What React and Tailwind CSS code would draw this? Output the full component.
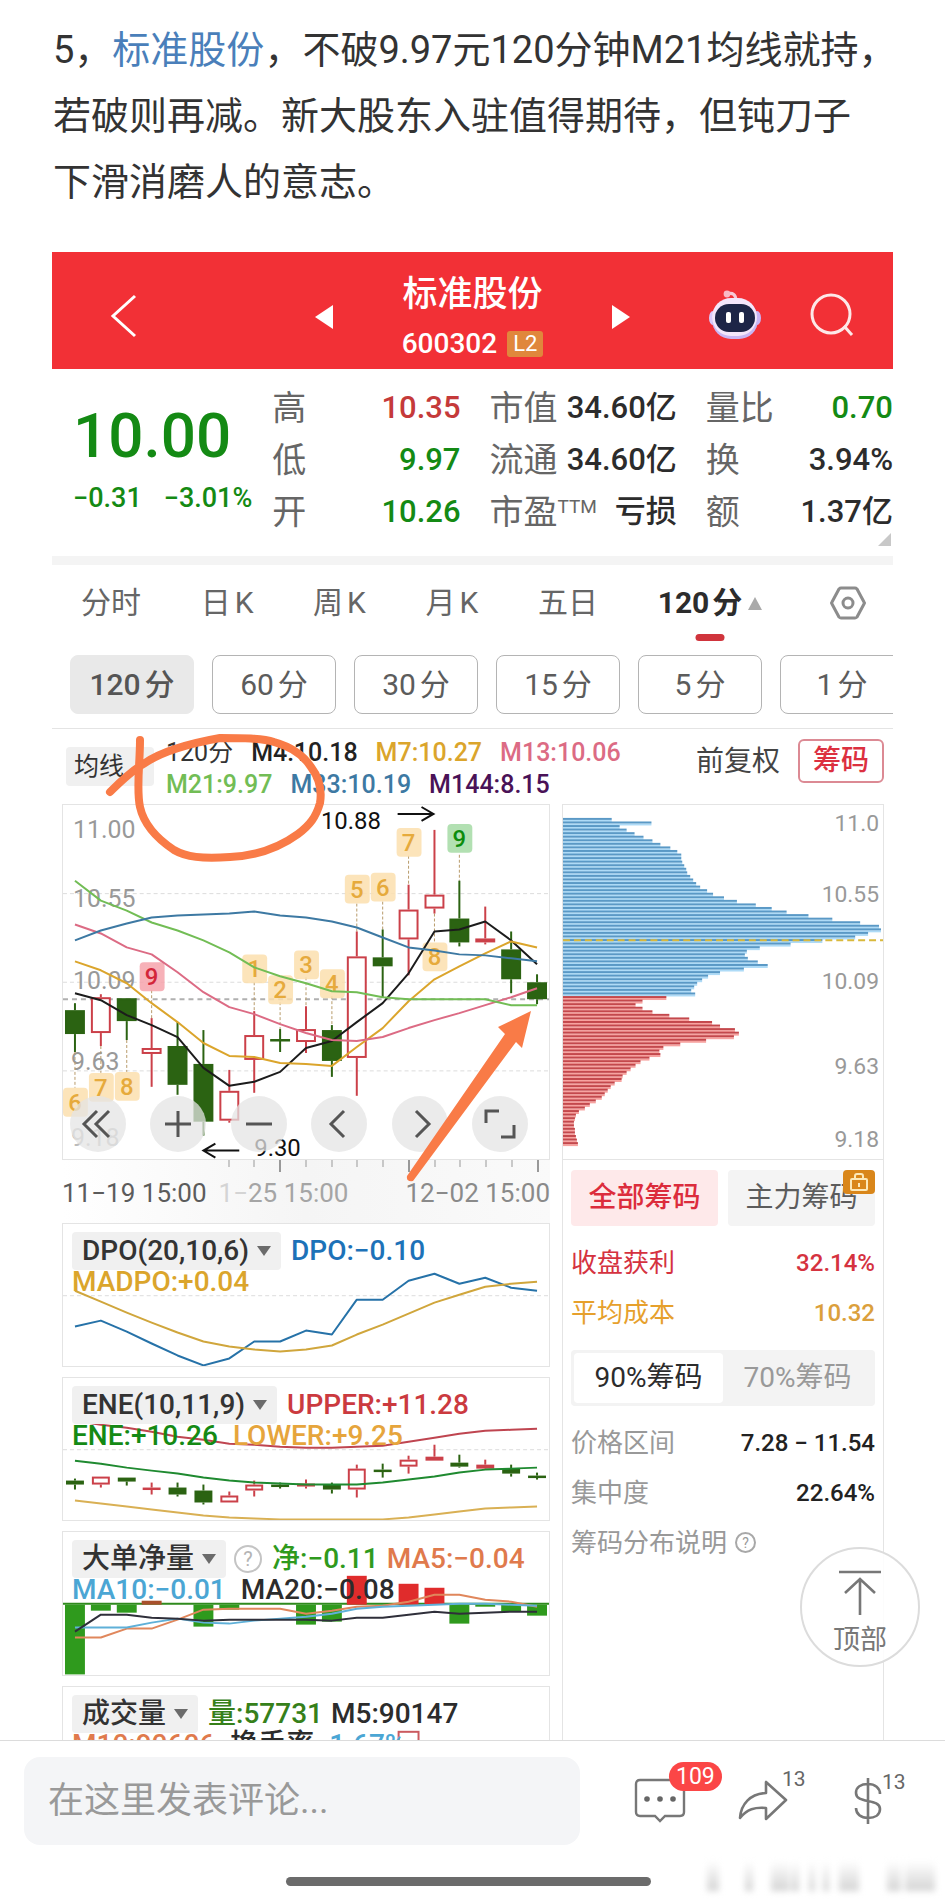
import React, { useState } from 'react';

const STEP = 25.75;
const px = (i) => Math.round(12 + STEP * i);
const toPoints = (ys) => ys.map((y, i) => `${px(i)},${y}`).join(' ');

// [body top, body bottom, high, low, up]
const candles = [
  [206, 230, 199, 248, 0],
  [193, 229, 190, 242, 1],
  [194, 217, 194, 236, 0],
  [244, 250, 214, 283, 1],
  [242, 281, 218, 291, 0],
  [260, 318, 226, 332, 0],
  [287, 317, 266, 319, 1],
  [231, 256, 207, 289, 1],
  [235, 237, 225, 248, 0],
  [225, 238, 202, 249, 1],
  [226, 257, 221, 273, 0],
  [152, 254, 127, 292, 1],
  [153, 162, 125, 193, 0],
  [105, 135, 80, 171, 1],
  [90, 104, 25, 109, 1],
  [114, 138, 76, 142, 0],
  [134, 138, 102, 140, 1],
  [145, 175, 127, 189, 0],
  [178, 195, 170, 200, 0],
];

const averages = [
  { color: '#1c1c1c', ys: [189, 196, 211, 221, 233, 264, 282, 278, 268, 244, 237, 218, 199, 169, 127, 125, 117, 136, 160] },
  { color: '#dba52c', ys: [157, 166, 179, 199, 218, 239, 252, 253, 259, 260, 262, 243, 224, 197, 175, 162, 149, 137, 143] },
  { color: '#dc6b84', ys: [120, 129, 143, 150, 168, 188, 203, 210, 220, 229, 236, 237, 233, 224, 216, 209, 201, 193, 184] },
  { color: '#72bd55', ys: [76, 96, 106, 118, 126, 136, 148, 163, 172, 179, 187, 188, 193, 195, 195, 195, 195, 201, 201] },
  { color: '#3d79a3', ys: [136, 126, 119, 113, 111, 110, 109, 107, 111, 113, 117, 123, 133, 143, 146, 150, 151, 154, 157] },
];

// [text, candle index, badge top, leader start, leader end, kind]
const marks = [
  ['6', 0, 284, 248, 284, 'y'],
  ['7', 1, 269, 242, 269, 'y'],
  ['8', 2, 268, 236, 268, 'y'],
  ['9', 3, 158, 186, 214, 'r'],
  ['1', 7, 150, 178, 207, 'y'],
  ['2', 8, 171, 198, 225, 'y'],
  ['3', 9, 146, 173, 202, 'y'],
  ['4', 10, 165, 192, 221, 'y'],
  ['5', 11, 70, 99, 127, 'y'],
  ['6', 12, 68, 97, 125, 'y'],
  ['7', 13, 23, 51, 80, 'y'],
  ['8', 14, 138, 109, 138, 'y'],
  ['9', 15, 19, 50, 76, 'g'],
];

const markColors = {
  y: { bg: '#fbdfae', fg: '#e6aa3c' },
  r: { bg: '#f6a3ab', fg: '#d3263a' },
  g: { bg: '#a4dba4', fg: '#0c8c0c' },
};

const blueChips = [
  49, 89, 57, 64, 72, 81, 90, 98, 108, 115, 119, 119, 120, 122, 124, 125, 128, 131, 134, 138, 145, 151, 162, 175, 194,
  210, 225, 247, 271, 299, 318, 320, 307, 294, 261, 229, 198, 185, 183, 186, 196, 206, 182, 158, 146, 140, 135, 132,
  129, 133,
];
const redChips = [
  104, 80, 73, 80, 90, 107, 127, 150, 158, 173, 177, 172, 144, 118, 101, 97, 98, 87, 78, 73, 68, 64, 60, 59, 52, 48,
  45, 42, 39, 33, 27, 22, 16, 13, 12, 11, 11, 12, 12, 13, 14, 15,
];

const dpo = [103, 97, 108, 120, 132, 142, 135, 118, 118, 107, 111, 76, 76, 57, 50, 60, 54, 64, 67];
const madpo = [67, 78, 89, 99, 109, 118, 123, 126, 128, 126, 122, 111, 101, 90, 79, 71, 63, 60, 58];

const eneUpper = [43, 47, 50, 54, 59, 62, 66, 67, 69, 70, 70, 69, 68, 64, 60, 56, 53, 52, 51];
const eneMid = [83, 86, 90, 93, 96, 100, 103, 105, 106, 107, 107, 107, 105, 102, 99, 95, 92, 91, 90];
const eneLower = [123, 126, 129, 132, 135, 138, 140, 141, 142, 142, 142, 142, 142, 140, 137, 134, 131, 130, 129];
const eneCandles = [
  [103, 107, 101, 112, 0],
  [99, 107, 99, 110, 1],
  [100, 104, 100, 108, 0],
  [110, 111, 105, 117, 1],
  [110, 117, 105, 119, 0],
  [113, 125, 107, 127, 0],
  [118, 125, 114, 125, 1],
  [107, 113, 103, 119, 1],
  [107, 109, 105, 111, 0],
  [106, 109, 102, 111, 1],
  [107, 112, 105, 116, 0],
  [91, 112, 87, 120, 1],
  [92, 94, 86, 100, 0],
  [82, 89, 78, 96, 1],
  [79, 83, 67, 83, 1],
  [85, 89, 77, 90, 0],
  [87, 91, 82, 92, 1],
  [91, 96, 87, 99, 0],
  [98, 100, 95, 102, 0],
];

// [candle index, top, bottom, color]
const netBars = [
  [0, 73, 143, '#2f9a1d'],
  [1, 73, 79, '#2f9a1d'],
  [2, 73, 81, '#2f9a1d'],
  [3, 69, 73, '#a8502c'],
  [5, 73, 95, '#2f9a1d'],
  [6, 73, 78, '#2f9a1d'],
  [9, 73, 93, '#2f9a1d'],
  [10, 73, 90, '#2f9a1d'],
  [11, 44, 73, '#e02c2c'],
  [13, 52, 73, '#e02c2c'],
  [14, 56, 73, '#e02c2c'],
  [15, 73, 92, '#2f9a1d'],
  [16, 73, 75, '#2f9a1d'],
  [17, 73, 80, '#2f9a1d'],
  [18, 73, 84, '#2f9a1d'],
];
const netMa5 = [106, 106, 97, 97, 88, 78, 77, 77, 77, 82, 79, 75, 74, 70, 63, 63, 68, 70, 75];
const netMa10 = [96, 96, 96, 91, 87, 91, 92, 89, 87, 85, 82, 77, 75, 74, 73, 72, 72, 73, 74];
const netMa20 = [100, 83, 83, 86, 87, 89, 88, 88, 88, 88, 89, 86, 86, 83, 80, 82, 81, 80, 80];

const quoteCols = [
  [
    ['高', '10.35', 'text-[#c53a3a]'],
    ['低', '9.97', 'text-[#148a14]'],
    ['开', '10.26', 'text-[#148a14]'],
  ],
  [
    ['市值', '34.60亿', 'text-[#2c2c2c]'],
    ['流通', '34.60亿', 'text-[#2c2c2c]'],
    ['市盈', '亏损', 'text-[#2c2c2c]', 'TTM'],
  ],
  [
    ['量比', '0.70', 'text-[#148a14]'],
    ['换', '3.94%', 'text-[#2c2c2c]'],
    ['额', '1.37亿', 'text-[#2c2c2c]'],
  ],
];

const Candle = ({ i, data, half }) => {
  const [top, bottom, high, low, up] = data;
  const x = px(i);
  const color = up ? '#cb4049' : '#2b6312';
  return (
    <g stroke={color} strokeWidth="2">
      <line x1={x} x2={x} y1={high} y2={top} />
      <line x1={x} x2={x} y1={bottom} y2={low} />
      <rect
        x={x - half + 1}
        y={top + 1}
        width={half * 2 - 2}
        height={Math.max(bottom - top - 2, 0.5)}
        fill={up ? '#fff' : color}
      />
    </g>
  );
};

const Line = ({ ys, color, width = 2 }) => (
  <polyline points={toPoints(ys)} fill="none" stroke={color} strokeWidth={width} strokeLinejoin="round" />
);

const Caret = () => (
  <svg viewBox="0 0 14 10" className="h-[10px] w-[14px]" aria-hidden="true">
    <path d="M0 0h14L7 10z" fill="#6b6b6b" />
  </svg>
);

const Header = () => (
  <header className="grid h-[117px] grid-cols-[minmax(0,1fr)_316px_minmax(0,1fr)] items-center bg-[#f23036] text-white">
    <div className="pl-[57px] pt-[10px]">
      <button aria-label="返回" className="block">
        <svg viewBox="0 0 28 44" className="h-[44px] w-[28px]" fill="none" stroke="#fff" strokeWidth="3">
          <path d="M26 2 4 22l22 20" />
        </svg>
      </button>
    </div>
    <div className="flex items-center justify-between">
      <button aria-label="上一只" className="pt-3">
        <svg viewBox="0 0 18 24" className="h-6 w-[18px]" fill="#fff">
          <path d="M18 0v24L0 12z" />
        </svg>
      </button>
      <div className="flex flex-col items-center pt-4">
        <h1 className="text-[35px] font-medium leading-[50px]">标准股份</h1>
        <div className="flex items-center gap-2.5">
          <span className="text-[28px] font-medium leading-[48px]">600302</span>
          <span className="rounded-[3px] bg-[#e0873c] px-1.5 text-[22px] leading-[26px]">L2</span>
        </div>
      </div>
      <button aria-label="下一只" className="pt-3">
        <svg viewBox="0 0 18 24" className="h-6 w-[18px]" fill="#fff">
          <path d="M0 0v24l18-12z" />
        </svg>
      </button>
    </div>
    <div className="flex items-center justify-between pl-[77px] pr-[38px] pt-2">
      <button aria-label="智能助手">
        <svg viewBox="0 0 54 50" className="h-[50px] w-[54px]">
          <path d="M19 4c6-2 9 1 9 7" fill="none" stroke="#f7c9d6" strokeWidth="3" />
          <circle cx="19" cy="4" r="3.4" fill="#f9b9c4" />
          <ellipse cx="5" cy="28" rx="4" ry="7" fill="#d9c8fb" />
          <ellipse cx="49" cy="28" rx="4" ry="7" fill="#c9b4f5" />
          <rect x="4" y="10" width="46" height="39" rx="19" fill="#c8b6f4" />
          <rect x="4" y="8" width="45" height="38" rx="19" fill="#f3e6fb" />
          <rect x="7" y="14" width="40" height="28" rx="14" fill="#1d2547" />
          <rect x="18" y="22" width="5" height="11" rx="2" fill="#fff" />
          <rect x="31" y="22" width="5" height="11" rx="2" fill="#fff" />
        </svg>
      </button>
      <button aria-label="搜索">
        <svg viewBox="0 0 46 46" className="size-[46px]" fill="none" stroke="#fde8e8" strokeWidth="3">
          <circle cx="22" cy="22" r="19" />
          <path d="m35 34 8 9" />
        </svg>
      </button>
    </div>
  </header>
);

const Quote = () => (
  <section className="relative grid grid-cols-[minmax(0,191fr)_minmax(0,188fr)_minmax(0,187fr)_minmax(0,187fr)] gap-x-[29px] pb-[18px] pt-[13px]">
    <div className="whitespace-nowrap pl-[21px] text-[#148a14]">
      <p className="pt-4 text-[62px] font-medium leading-[76px]">10.00</p>
      <p className="flex gap-[22px] text-[27px] font-medium leading-[48px]">
        <span>−0.31</span>
        <span>−3.01%</span>
      </p>
    </div>
    {quoteCols.map((col, c) => (
      <dl key={c} className="whitespace-nowrap">
        {col.map(([label, value, color, sup]) => (
          <div key={label} className="flex items-center justify-between leading-[52px]">
            <dt className="flex text-[34px] text-[#666]">
              {label}
              {sup && <span className="text-[19px] leading-[42px]">{sup}</span>}
            </dt>
            <dd className={`text-[31px] font-medium ${color}`}>{value}</dd>
          </div>
        ))}
      </dl>
    ))}
    <svg viewBox="0 0 13 13" className="absolute bottom-2.5 right-0.5 size-[13px]" aria-hidden="true">
      <path d="M13 0v13H0z" fill="#c8c8c8" />
    </svg>
  </section>
);

const PeriodTabs = () => {
  const tabs = [['分时'], ['日', 'K'], ['周', 'K'], ['月', 'K'], ['五日']];
  return (
    <nav className="flex items-center justify-between pl-[29px] pr-[27px] text-[30px] leading-[76px] text-[#666]">
      {tabs.map((parts) => (
        <button key={parts.join('')} className="flex gap-1">
          {parts.map((p) => (
            <span key={p}>{p}</span>
          ))}
        </button>
      ))}
      <button className="relative mr-2 flex items-center gap-1.5 font-bold text-[#2c2c2c]">
        <span className="flex gap-[3px]">
          <span>120</span>
          <span>分</span>
        </span>
        <svg viewBox="0 0 14 13" className="h-[13px] w-[14px]" aria-hidden="true">
          <path d="M7 0l7 13H0z" fill="#aaa" />
        </svg>
        <span className="absolute bottom-0 left-1/2 h-[7px] w-[29px] -translate-x-1/2 rounded-full bg-[#d0343c]" />
      </button>
      <button aria-label="设置">
        <svg viewBox="0 0 36 34" className="h-[34px] w-9" fill="none" stroke="#8c8c8c" strokeWidth="3">
          <path d="M11 2h14q1 0 2 1l7 13q1 1 0 2l-7 13q-1 1-2 1H11q-1 0-2-1L2 18q-1-1 0-2L9 3q1-1 2-1z" />
          <circle cx="18" cy="17" r="5" />
        </svg>
      </button>
    </nav>
  );
};

const MinuteChips = () => {
  const [active, setActive] = useState(120);
  return (
    <div className="flex gap-[18px] overflow-hidden pb-[14px] pl-[18px] pt-[14px]">
      {[120, 60, 30, 15, 5, 1].map((m) => (
        <button
          key={m}
          onClick={() => setActive(m)}
          className={`flex h-[59px] w-[124px] shrink-0 items-center justify-center gap-1 rounded-lg border text-[30px] ${
            m === active ? 'border-[#e9e9e9] bg-[#e9e9e9] font-medium text-[#555]' : 'border-[#b4b4b4] text-[#5c5c5c]'
          }`}
        >
          <span>{m}</span>
          <span>分</span>
        </button>
      ))}
    </div>
  );
};

const Legend = () => (
  <div className="flex h-[75px] items-start whitespace-nowrap pl-[14px] pr-[9px] text-[25px] font-medium">
    <button className="mt-[18px] h-[39px] w-[88px] rounded bg-[#f0f0f0] pl-2 text-left text-[25px] font-normal text-[#333]">
      均线
    </button>
    <div className="min-w-0 flex-1 pl-3 pt-2 leading-8">
      <p className="flex gap-[18px]">
        <span className="font-normal text-[#333]">120分</span>
        <span className="text-[#222]">M4:10.18</span>
        <span className="text-[#dba52c]">M7:10.27</span>
        <span className="text-[#dc6b84]">M13:10.06</span>
      </p>
      <p className="flex gap-[18px]">
        <span className="text-[#72bd55]">M21:9.97</span>
        <span className="text-[#3d79a3]">M33:10.19</span>
        <span className="text-[#4a1257]">M144:8.15</span>
      </p>
    </div>
    <button className="mt-3 text-[28px] font-normal leading-[42px] text-[#444]">前复权</button>
    <button className="ml-[18px] mt-2.5 h-11 w-[86px] rounded-md border-2 border-[#dc8a94] text-[28px] leading-none text-[#dc3040]">
      筹码
    </button>
  </div>
);

const chartButtons = [
  ['最早', 'M27 15 14 28l13 13M39 15 26 28l13 13'],
  ['放大', 'M15 28h26M28 15v26'],
  ['缩小', 'M15 28h26'],
  ['向左', 'M33 15 20 28l13 13'],
  ['向右', 'M24 15l13 13-13 13'],
  ['全屏', 'M14 27V15h13M42 29v12H29'],
];

const KLine = () => (
  <div className="relative">
    <svg viewBox="0 0 488 355" className="block h-auto w-full overflow-visible border border-[#e4e4e4]">
      <g stroke="#dcdcdc" strokeDasharray="4 3">
        <line x1="0" x2="488" y1="89" y2="89" />
        <line x1="0" x2="488" y1="178" y2="178" />
        <line x1="0" x2="488" y1="267" y2="267" />
      </g>
      <line x1="0" x2="488" y1="195" y2="195" stroke="#b0b0b0" strokeWidth="2" strokeDasharray="5 4" />
      <g fill="#999" fontSize="25">
        <text x="10" y="33">11.00</text>
        <text x="10" y="102">10.55</text>
        <text x="10" y="185">10.09</text>
        <text x="8" y="266">9.63</text>
        <text x="8" y="342" fill="#bbb">9.18</text>
      </g>
      {marks.map(([text, i, y, from, to, kind]) => (
        <g key={`${text}-${i}`}>
          <line x1={px(i)} x2={px(i)} y1={from} y2={to} stroke="#b79a6a" strokeDasharray="3 2" />
          <rect x={px(i) - 12} y={y} width="25" height="29" rx="4" fill={markColors[kind].bg} fillOpacity="0.85" />
          <text x={px(i)} y={y + 23} fill={markColors[kind].fg} fontSize="24" fontWeight="500" textAnchor="middle">
            {text}
          </text>
        </g>
      ))}
      {candles.map((c, i) => (
        <Candle key={i} i={i} data={c} half={10} />
      ))}
      {averages.map((a) => (
        <Line key={a.color} ys={a.ys} color={a.color} />
      ))}
      <g fill="#111" fontSize="24">
        <text x="259" y="24">10.88</text>
        <text x="192" y="352">9.30</text>
      </g>
      <g fill="none" stroke="#111" strokeWidth="2">
        <path d="M336 9h36M360 2l12 7-12 7" />
        <path d="M177 347h-36M153 340l-12 7 12 7" />
      </g>
    </svg>
    <div className="absolute inset-x-2 bottom-[8px] flex justify-between pr-[14px]">
      {chartButtons.map(([name, d]) => (
        <button key={name} aria-label={name} className="size-14 rounded-full bg-[#e4e4e4]/75">
          <svg viewBox="0 0 56 56" className="size-14" fill="none" stroke="#555" strokeWidth="3">
            <path d={d} />
          </svg>
        </button>
      ))}
    </div>
  </div>
);

const TimeAxis = () => (
  <div className="h-[63px] bg-gradient-to-r from-white via-[#f5f5f5] to-[#fafafa]">
    <svg viewBox="0 0 488 12" className="block h-auto w-full" stroke="#999">
      {[6, 7, 8, 9, 10, 11, 12, 13, 14, 15, 16, 17, 18].map((i) => {
        const major = i === 8 || i === 13 || i === 18;
        return <line key={i} x1={px(i)} x2={px(i)} y1="0" y2={major ? 12 : 7} strokeWidth={major ? 2 : 1} />;
      })}
    </svg>
    <div className="flex whitespace-nowrap text-[26px] leading-[42px] text-[#8a8a8a]">
      <span className="text-[#5c5c5c]">11−19 15:00</span>
      <span className="ml-3 text-[#a5a5a5]">
        <span className="text-[#d4d4d4]">1−</span>25 15:00
      </span>
      <span className="ml-auto">12−02 15:00</span>
    </div>
  </div>
);

const Panel = ({ title, help, first, second, children }) => (
  <div className="relative mb-2.5">
    <svg viewBox="0 0 488 143" className="block h-auto w-full border border-[#e4e4e4]">
      {children}
    </svg>
    <div className="absolute inset-x-0 top-[9px] whitespace-nowrap pl-2.5 text-[28px] font-medium">
      <div className="flex h-[38px] items-center">
        <button className="flex h-[38px] items-center gap-2 rounded bg-[#f0f0f0] px-2.5 text-[#333]">
          {title}
          <Caret />
        </button>
        {help && (
          <span className="ml-2 flex size-7 items-center justify-center rounded-full border-2 border-[#c4c4c4] text-[20px] font-normal text-[#b4b4b4]">
            ?
          </span>
        )}
        <p className="flex gap-2 pl-2.5">{first}</p>
      </div>
      <p className="flex gap-[15px] leading-6">{second}</p>
    </div>
  </div>
);

const Indicators = () => (
  <>
    <Panel
      title="DPO(20,10,6)"
      first={<span className="text-[#1d72b8]">DPO:−0.10</span>}
      second={<span className="text-[#dba52c]">MADPO:+0.04</span>}
    >
      <line x1="0" x2="488" y1="72" y2="72" stroke="#dcdcdc" strokeDasharray="4 3" />
      <Line ys={dpo} color="#2672a8" />
      <Line ys={madpo} color="#d0a63c" />
    </Panel>
    <Panel
      title="ENE(10,11,9)"
      first={<span className="text-[#cb3a3f]">UPPER:+11.28</span>}
      second={
        <>
          <span className="text-[#148a14]">ENE:+10.26</span>
          <span className="text-[#e6a53c]">LOWER:+9.25</span>
        </>
      }
    >
      <line x1="0" x2="488" y1="72" y2="72" stroke="#dcdcdc" strokeDasharray="4 3" />
      {eneCandles.map((c, i) => (
        <Candle key={i} i={i} data={c} half={9} />
      ))}
      <Line ys={eneUpper} color="#bf4550" />
      <Line ys={eneMid} color="#1f8a30" />
      <Line ys={eneLower} color="#d9b054" />
    </Panel>
    <Panel
      title="大单净量"
      help
      first={
        <>
          <span className="text-[#2f9a1d]">净:−0.11</span>
          <span className="text-[#e07a4c]">MA5:−0.04</span>
        </>
      }
      second={
        <>
          <span className="text-[#4ba6d4]">MA10:−0.01</span>
          <span className="text-[#2c2c2c]">MA20:−0.08</span>
        </>
      }
    >
      <line x1="0" x2="488" y1="72" y2="72" stroke="#2f8a1d" strokeWidth="2" />
      {netBars.map(([i, top, bottom, color]) => (
        <rect key={i} x={px(i) - 10} y={top} width="20" height={bottom - top} fill={color} />
      ))}
      <Line ys={netMa5} color="#e0875c" />
      <Line ys={netMa10} color="#5fb0d8" />
      <Line ys={netMa20} color="#2f2f3a" />
    </Panel>
    <Panel
      title="成交量"
      first={
        <>
          <span className="text-[#36801a]">量:57731</span>
          <span className="text-[#2c2c2c]">M5:90147</span>
        </>
      }
      second={
        <>
          <span className="text-[#e07a4c]">M10:90606</span>
          <span className="text-[#2c2c2c]">换手率</span>
          <span className="text-[#4ba6d4]">1.67%</span>
        </>
      }
    >
      <rect x="337" y="45" width="20" height="99" fill="none" stroke="#cb5a5f" strokeWidth="2" />
    </Panel>
  </>
);

const ChipChart = () => {
  const pitch = 3.585;
  const bars = [
    ...blueChips.map((w) => [w, '#aedbf7', '#5a99c6']),
    ...redChips.map((w) => [w, '#f7a3a0', '#c4484c']),
  ];
  return (
    <svg viewBox="0 0 322 356" className="block h-auto w-full border-y border-[#e4e4e4]">
      {bars.map(([w, light, dark], i) => {
        const y = 13 + i * pitch;
        return (
          <g key={i}>
            <rect x="0" y={y + 2} width={w} height="2" fill={light} />
            <rect x="0" y={y} width={w} height="2" fill={dark} />
          </g>
        );
      })}
      <line x1="0" x2="322" y1="136" y2="136" stroke="#d9b93c" strokeWidth="2" strokeDasharray="7 4" />
      <g fill="#999" fontSize="23" textAnchor="end">
        <text x="318" y="26">11.0</text>
        <text x="318" y="98">10.55</text>
        <text x="318" y="185">10.09</text>
        <text x="318" y="271">9.63</text>
        <text x="318" y="344">9.18</text>
      </g>
    </svg>
  );
};

const ChipRow = ({ label, value, labelClass, valueClass }) => (
  <div className="flex items-center justify-between leading-[50px]">
    <dt className={labelClass}>{label}</dt>
    <dd className={`text-[24px] font-medium ${valueClass}`}>{value}</dd>
  </div>
);

const ChipPanel = () => (
  <aside className="border-x border-[#e4e4e4]">
    <ChipChart />
    <div className="whitespace-nowrap px-2 pt-2.5 text-[26px]">
      <div className="grid grid-cols-2 gap-2.5 text-[28px]">
        <button className="h-14 rounded bg-[#fee9ea] font-medium text-[#dc2c3c]">全部筹码</button>
        <button className="relative h-14 rounded bg-[#f4f4f4] text-[#5c5c5c]">
          主力筹码
          <span className="absolute right-0 top-0 flex h-6 w-8 items-center justify-center rounded-sm bg-[#d9861a]">
            <svg viewBox="0 0 20 20" className="size-5" fill="none" stroke="#fce8b8" strokeWidth="2">
              <rect x="2" y="7" width="16" height="11" rx="1" />
              <path d="M6 7V4q0-2 2-2h4q2 0 2 2v3M10 11v4" />
            </svg>
          </span>
        </button>
      </div>
      <dl className="pt-3">
        <ChipRow label="收盘获利" value="32.14%" labelClass="text-[#d5323f]" valueClass="text-[#d5323f]" />
        <ChipRow label="平均成本" value="10.32" labelClass="text-[#e6a02c]" valueClass="text-[#dba03c]" />
      </dl>
      <div className="mt-3 grid h-14 grid-cols-2 rounded bg-[#f3f3f3] p-[3px] text-[28px]">
        <button className="rounded bg-white text-[#2c2c2c]">90%筹码</button>
        <button className="text-[#999]">70%筹码</button>
      </div>
      <dl className="pt-3">
        <ChipRow label="价格区间" value="7.28 − 11.54" labelClass="text-[#999]" valueClass="text-[#222]" />
        <ChipRow label="集中度" value="22.64%" labelClass="text-[#999]" valueClass="text-[#222]" />
      </dl>
      <button className="flex items-center gap-2 leading-[50px] text-[#999]">
        筹码分布说明
        <span className="flex size-[21px] items-center justify-center rounded-full border-2 border-[#a8a8a8] text-[14px] leading-none">
          ?
        </span>
      </button>
    </div>
  </aside>
);

// hand drawn circle and arrow over the chart
const Annotations = () => (
  <svg viewBox="0 0 841 500" className="pointer-events-none absolute inset-x-0 top-0 h-auto w-full" aria-hidden="true">
    <path
      d="M58 63C72 49 84 39 93 34C112 21 140 14 168 9C190 9 210 9 222 13C240 18 252 27 259 38C268 50 270 62 268 74C264 88 258 96 246 105C224 121 200 127 178 128C150 130 134 128 122 121C104 109 92 96 88 78C84 60 88 36 88 11"
      fill="none"
      stroke="#f97b47"
      strokeWidth="8"
      strokeLinecap="round"
      strokeLinejoin="round"
    />
    <path d="M355 447 453 305 446 298 479 282 470 319 464 313 361 452Q354 453 355 447z" fill="#f97b47" />
  </svg>
);

const smudges = [
  [2, 12],
  [40, 8],
  [66, 18],
  [86, 8],
  [104, 6],
  [118, 6],
  [134, 20],
  [182, 14],
  [200, 30],
];

const Footer = () => (
  <footer className="h-[160px] shrink-0 border-t border-[#dcdcdc] bg-white">
    <div className="flex items-center pl-6 pr-[63px] pt-4">
      <input
        aria-label="发表评论"
        placeholder="在这里发表评论..."
        className="h-[88px] min-w-0 flex-1 rounded-2xl bg-[#f4f5f7] px-6 text-[36px] placeholder:text-[#999]"
      />
      <div className="flex shrink-0 items-center pl-[54px] text-[#666]">
        <button aria-label="评论 109" className="relative">
          <svg viewBox="0 0 52 46" className="h-[46px] w-[52px]" fill="none" stroke="#777" strokeWidth="2.4">
            <path d="M6 2h40q4 0 4 4v28q0 4-4 4H31l-5 5-5-5H6q-4 0-4-4V6q0-4 4-4z" />
            <g fill="#666" stroke="none">
              <circle cx="13" cy="21" r="2.8" />
              <circle cx="26" cy="21" r="2.8" />
              <circle cx="39" cy="21" r="2.8" />
            </g>
          </svg>
          <span className="absolute -top-[16px] left-[35px] rounded-full bg-[#fb4646] px-[7px] text-[23px] leading-[29px] text-white">
            109
          </span>
        </button>
        <button aria-label="分享 13" className="relative ml-[52px]">
          <svg viewBox="0 0 50 42" className="h-[42px] w-[50px]" fill="none" stroke="#777" strokeWidth="2.6" strokeLinejoin="round">
            <path d="M28 2v11C12 14 3 24 2 38 9 29 17 27 28 28v11l20-19z" />
          </svg>
          <span className="absolute -top-[13px] left-[44px] text-[21px] leading-6">13</span>
        </button>
        <button aria-label="打赏 13" className="relative ml-[66px]">
          <svg viewBox="0 0 28 46" className="h-[46px] w-7" fill="none" stroke="#777" strokeWidth="2.6">
            <path d="M14 0v46M26 16c0-6-5-10-12-10S2 9 2 15c0 11 24 5 24 16 0 6-5 9-12 9S2 36 2 30" />
          </svg>
          <span className="absolute -top-[8px] left-[28px] text-[21px] leading-6">13</span>
        </button>
      </div>
    </div>
    <div className="relative mt-8 flex justify-center pr-2">
      <div className="h-[9px] w-[39%] rounded-full bg-[#6b6b6b]" />
      <svg viewBox="0 0 232 36" className="absolute -top-[20px] right-2 h-9 w-[232px] blur-[3px]" aria-hidden="true">
        <linearGradient id="fade" x1="0" x2="0" y1="0" y2="1">
          <stop offset="0" stopColor="#fff" />
          <stop offset="1" stopColor="#d4d4d4" />
        </linearGradient>
        {smudges.map(([x, w]) => (
          <rect key={x} x={x} y="4" width={w} height="30" fill="url(#fade)" />
        ))}
      </svg>
    </div>
  </footer>
);

export default function App() {
  return (
    <div className="relative flex h-screen flex-col bg-white [font-family:Roboto,'Noto_Sans_CJK_SC',sans-serif]">
      <main className="min-h-0 flex-1 overflow-hidden">
        <p className="whitespace-nowrap pl-[53px] pt-[17px] text-[38px] leading-[66px] text-[#333]">
          5，
          <a href="#stock" className="text-[#4a7fba]">
            标准股份
          </a>
          ，不破9.97元120分钟M21均线就持，
          <br />
          若破则再减。新大股东入驻值得期待，但钝刀子
          <br />
          下滑消磨人的意志。
        </p>
        <article className="mx-[52px] mt-[37px]">
          <Header />
          <Quote />
          <div className="h-[9px] bg-[#f4f4f4]" />
          <PeriodTabs />
          <MinuteChips />
          <div className="relative border-t border-[#e4e4e4]">
            <Legend />
            <div className="grid grid-cols-[minmax(0,488fr)_minmax(0,322fr)] gap-3 pl-2.5 pr-[9px]">
              <div>
                <KLine />
                <TimeAxis />
                <Indicators />
              </div>
              <ChipPanel />
            </div>
            <Annotations />
          </div>
        </article>
      </main>
      <button className="absolute bottom-[233px] right-[25px] flex size-[120px] flex-col items-center justify-center gap-1 rounded-full border-2 border-[#dcdcdc] bg-white/90 pt-4 text-[27px] leading-10 text-[#777]">
        <svg viewBox="0 0 42 46" className="h-[46px] w-[42px]" fill="none" stroke="#777" strokeWidth="2.6">
          <path d="M0 2h42M21 45V9M6 23 21 9l15 14" />
        </svg>
        顶部
      </button>
      <Footer />
    </div>
  );
}
